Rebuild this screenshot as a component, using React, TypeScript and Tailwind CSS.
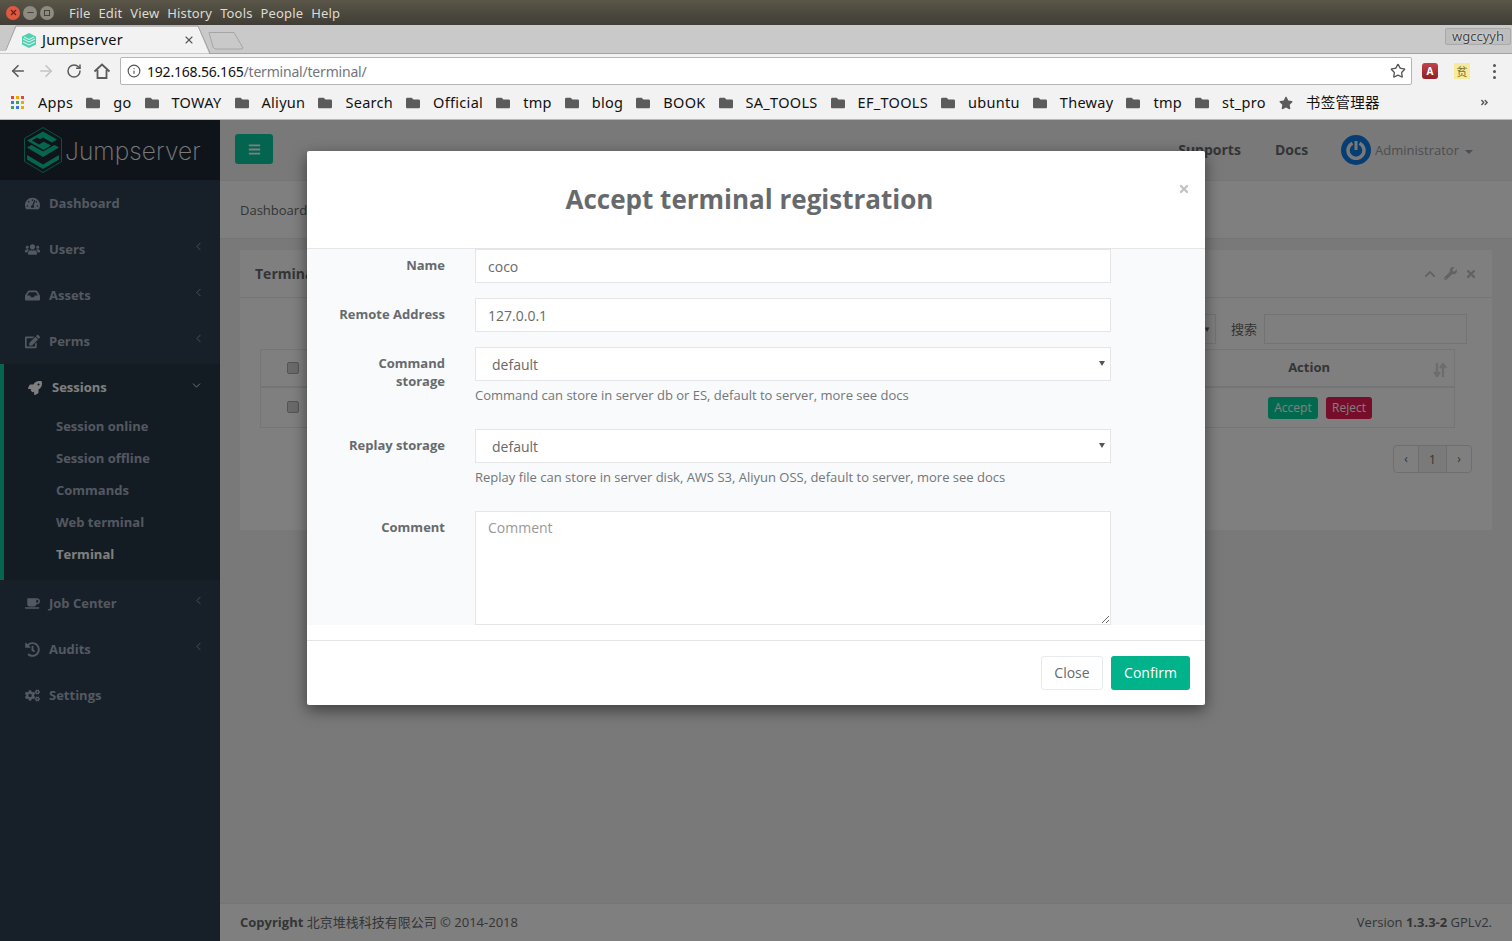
import { ArrowLeft, ArrowRight, RotateCw, Star, Info, X, Minus, ChevronLeft, ChevronDown } from 'lucide-react'
import { FaTachometerAlt, FaUsers, FaInbox, FaEdit, FaRocket, FaCoffee, FaHistory, FaCogs, FaFolder, FaStar, FaTimes, FaBars, FaChevronUp, FaWrench, FaAngleDoubleRight } from 'react-icons/fa'

const bookmarks = ['go', 'TOWAY', 'Aliyun', 'Search', 'Official', 'tmp', 'blog', 'BOOK', 'SA_TOOLS', 'EF_TOOLS', 'ubuntu', 'Theway', 'tmp', 'st_pro']
const menus = ['File', 'Edit', 'View', 'History', 'Tools', 'People', 'Help']
const subItems = ['Session online', 'Session offline', 'Commands', 'Web terminal']

function Logo({ className }: { className: string }) {
  return (
    <svg viewBox="0 0 38 46" className={className} fill="none">
      <path d="M19 .5 37.500 11.500v23L19 45.500.5 34.500v-23z" stroke="#12a583" strokeWidth="1" />
      <path d="M3 28l16 9.500L35 28v4.500L19 42 3 32.500z" fill="#0acb9e" />
      <path d="M3 20.500l4.500-2.500L19 24.500 30.500 18l4.500 2.500-16 9.500z" fill="#0acb9e" />
      <path d="M3 13.500 19 4.500l14 8-5 3-9-5-3.500 2L27 18.500l-7.500 4.500z" fill="#0acb9e" />
      <path d="M8 13.500l5-3 7 4 -5 3z" fill="#1e2836" />
    </svg>
  )
}

function AppsIcon() {
  const colors = ['#e8453c', '#f2a600', '#e8453c', '#3b78e7', '#34a853', '#f2a600', '#34a853', '#3b78e7', '#f2a600']
  return (
    <div className="grid grid-cols-3 gap-[2px] w-[13px] shrink-0">
      {colors.map((c, i) => (
        <span key={i} className="w-[3px] h-[3px]" style={{ background: c }} />
      ))}
    </div>
  )
}

function NavItem({ icon, label, arrow = true }: { icon: React.ReactNode; label: string; arrow?: boolean }) {
  return (
    <div className="h-[46px] flex items-center pl-[25px] pr-[18px] pt-[1px] text-[13px] font-bold text-[#a7b1c2]">
      <span className="w-[24px] text-[15px] shrink-0">{icon}</span>
      <span>{label}</span>
      {arrow && <ChevronLeft size={13} strokeWidth={1.5} className="ml-auto mb-[6px] mr-[-3px]" />}
    </div>
  )
}

function Label({ children }: { children: React.ReactNode }) {
  return <label className="w-[138px] pl-[25px] shrink-0 text-right text-[13px] leading-[18px] font-bold text-[#676a6c] pt-[7px]">{children}</label>
}

function SelectBox() {
  return (
    <div className="relative">
      <select defaultValue="default" className="appearance-none w-full h-[34px] bg-white border border-[#e5e6e7] px-[16px] text-[14px] text-[#676a6c] outline-none">
        <option>default</option>
      </select>
      <span className="absolute right-[6px] top-[14px] w-0 h-0 border-x-[3px] border-x-transparent border-t-[5px] border-t-[#555]" />
    </div>
  )
}

export default function App() {
  return (
    <div className="w-[1512px] h-[941px] overflow-hidden flex flex-col font-['Open_Sans',sans-serif] text-[#676a6c]">
      {/* OS title bar */}
      <div className="h-[25px] shrink-0 bg-gradient-to-b from-[#5a5648] to-[#3f3d36] flex items-center pl-[6px] font-['Noto_Sans',sans-serif]">
        <span className="w-[14px] h-[14px] rounded-full bg-[#e2583e] flex items-center justify-center text-[#5a2018]"><X size={9} strokeWidth={3} /></span>
        <span className="w-[14px] h-[14px] rounded-full bg-[#8d8a80] ml-[3px] flex items-center justify-center text-[#45433c]"><Minus size={9} strokeWidth={3} /></span>
        <span className="w-[14px] h-[14px] rounded-full bg-[#8d8a80] ml-[3px] flex items-center justify-center"><span className="w-[6px] h-[6px] border border-[#45433c]" /></span>
        <nav className="ml-[15px] pt-[2px] flex gap-[8px] text-[13px] tracking-[0.15px] text-[#dfdbd2]">
          {menus.map((m) => <span key={m}>{m}</span>)}
        </nav>
      </div>

      {/* Tab strip */}
      <div className="h-[29px] shrink-0 bg-[#c9c9c9] border-b border-[#a3a3a3] relative font-['Noto_Sans',sans-serif]">
        <svg width="250" height="29" className="absolute left-0 top-0" fill="none">
          <path d="M0 24H6L16 1.500H198L209 28.500H0z" fill="#f2f2f2" />
          <path d="M0 25H6L16 1H198L210 28" stroke="#a0a0a0" />
          <path d="M209 7.500H234L243 23Q243 24 241 24H216Q214 24 213 22z" fill="#c9c9c9" stroke="#a5a5a5" />
        </svg>
        <div className="relative flex items-center h-full pl-[22px] w-[196px] pt-[2px]">
          <svg viewBox="0 0 14 15" className="w-[14px] h-[15px] shrink-0"><path d="M7 0l7 3.500v8L7 15 0 11.500v-8z" fill="#4fd0b0" /><path d="M1 6l6 3 6-3M1 9l6 3 6-3M2 4l5 2.500L12 4" stroke="#e6f7f3" fill="none" /></svg>
          <span className="ml-[6px] text-[14.500px] tracking-[0.3px] text-[#111]">Jumpserver</span>
          <X size={12} strokeWidth={2.2} className="ml-auto mr-[1px] text-[#555]" />
        </div>
        <div className="absolute right-[1px] top-[3px] w-[66px] h-[17px] border border-[#a9a9a9] rounded-[2px] bg-[#bdbdbd] flex items-center justify-center text-[13px] text-[#444] [text-shadow:0_0_2px_#fff]">wgccyyh</div>
      </div>

      {/* Toolbar */}
      <div className="h-[34px] shrink-0 bg-[#f2f2f2] flex items-center pl-[9px] pr-[10px] font-['Noto_Sans',sans-serif]">
        <ArrowLeft size={18} strokeWidth={2.2} className="text-[#5a5a5a]" />
        <ArrowRight size={18} strokeWidth={2.2} className="ml-[10px] text-[#c4c4c4]" />
        <RotateCw size={16} strokeWidth={2.2} className="ml-[11px] text-[#5a5a5a]" />
        <svg viewBox="0 0 18 18" className="ml-[11px] w-[18px] h-[18px]" fill="none" stroke="#5a5a5a" strokeWidth="1.800"><path d="M1.500 9.500 9 2.500l7.500 7M4.500 8v8h9V8" /></svg>
        <div className="ml-[9px] w-[1292px] h-[28px] bg-white border border-[#b5b5b5] rounded-[2px] flex items-center pl-[6px] pr-[5px] text-[14px] tracking-[-0.2px]">
          <Info size={14} strokeWidth={2} className="text-[#555]" />
          <span className="ml-[6px] pt-[1px] text-[#111]">192.168.56.165</span>
          <span className="pt-[1px] text-[#71757d]">/terminal/terminal/</span>
          <Star size={16} strokeWidth={2} className="ml-auto text-[#555]" />
        </div>
        <span className="ml-[10px] w-[16px] h-[16px] rounded-[3px] bg-gradient-to-b from-[#c0444c] to-[#8f2026] text-white text-[10px] font-bold flex items-center justify-center">A</span>
        <span className="ml-[16px] w-[16px] h-[16px] bg-[#f7ea9a] text-[#7a6a2a] text-[11px] flex items-center justify-center font-['Noto_Sans_CJK_SC']">贫</span>
        <div className="ml-[23px] flex flex-col gap-[3px]">
          <span className="w-[3px] h-[3px] bg-[#555] rounded-full" />
          <span className="w-[3px] h-[3px] bg-[#555] rounded-full" />
          <span className="w-[3px] h-[3px] bg-[#555] rounded-full" />
        </div>
      </div>

      {/* Bookmarks */}
      <div className="h-[32px] shrink-0 bg-[#f2f2f2] border-b border-[#b9b9b9] flex items-center pl-[11px] pb-[2px] text-[14.500px] tracking-[0.3px] text-[#111] font-['Noto_Sans','Noto_Sans_CJK_SC',sans-serif]">
        <AppsIcon />
        <span className="ml-[14px]">Apps</span>
        {bookmarks.map((b, i) => (
          <span key={i} className="flex items-center">
            <FaFolder size={14} className="ml-[13px] text-[#5b5b5b]" />
            <span className="ml-[13px]">{b}</span>
          </span>
        ))}
        <FaStar size={14} className="ml-[13px] text-[#5b5b5b]" />
        <span className="ml-[13px]">书签管理器</span>
        <FaAngleDoubleRight size={9} className="ml-auto mr-[23px] text-[#555]" />
      </div>

      {/* Page */}
      <div className="relative flex-1 flex min-h-0 bg-[#f3f3f4]">
        <aside className="w-[220px] shrink-0 bg-[#2f4050] flex flex-col">
          <div className="h-[60px] bg-[#1e2836] flex items-center pl-[24px] shrink-0">
            <Logo className="w-[38px] h-[46px] shrink-0" />
            <span className="ml-[3px] pt-[3px] text-[24.500px] font-['Inter',sans-serif] font-extralight tracking-[0.1px] text-[#f5f5f5]">Jumpserver</span>
          </div>
          <NavItem icon={<FaTachometerAlt />} label="Dashboard" arrow={false} />
          <NavItem icon={<FaUsers />} label="Users" />
          <NavItem icon={<FaInbox />} label="Assets" />
          <NavItem icon={<FaEdit />} label="Perms" />
          <div className="h-[216px] bg-[#293846] border-l-4 border-[#0acb9e] shrink-0">
            <div className="h-[46px] flex items-center pl-[24px] pr-[18px] pt-[1px] text-[13px] font-bold text-[#fff]">
              <span className="w-[24px] text-[14px] shrink-0"><FaRocket /></span>
              <span>Sessions</span>
              <ChevronDown size={13} strokeWidth={1.6} className="ml-auto mb-[5px] mr-[-1px]" />
            </div>
            {subItems.map((s) => (
              <div key={s} className="h-[32px] flex items-center pl-[52px] pt-[1px] text-[13px] font-bold text-[#a7b1c2]">{s}</div>
            ))}
            <div className="h-[32px] flex items-center pl-[52px] pt-[1px] text-[13px] font-bold text-white">Terminal</div>
          </div>
          <NavItem icon={<FaCoffee />} label="Job Center" />
          <NavItem icon={<FaHistory />} label="Audits" />
          <NavItem icon={<FaCogs />} label="Settings" arrow={false} />
        </aside>

        <main className="flex-1 min-w-0 flex flex-col">
          <header className="h-[61px] shrink-0 bg-[#f3f3f4] border-b border-[#e7eaec] flex items-center pl-[15px] pr-[39px] pb-[2px]">
            <button className="w-[38px] h-[30px] rounded-[3px] bg-[#06cb9e] text-white flex items-center justify-center"><FaBars size={13} /></button>
            <span className="ml-auto text-[14px] font-bold">Supports</span>
            <span className="ml-[34px] text-[14px] font-bold">Docs</span>
            <span className="ml-[33px] mt-[2px] w-[30px] h-[30px] rounded-full bg-[#0c7ae6] flex items-center justify-center">
              <svg viewBox="0 0 20 20" className="w-[20px] h-[20px]" fill="none" stroke="#f3f3f4" strokeWidth="3.500"><path d="M6.500 3.200a8 8 0 1 0 7 0" /><path d="M10 1v9" strokeWidth="3" /></svg>
            </span>
            <span className="ml-[4px] mt-[3px] text-[13px] text-[#999c9e]">Administrator</span>
            <span className="ml-[6px] mt-[5px] w-0 h-0 border-x-[4px] border-x-transparent border-t-[4px] border-t-[#999c9e]" />
          </header>
          <div className="h-[58px] shrink-0 bg-white border-b border-[#e7eaec] flex items-center pl-[20px] pt-[3px] text-[13px]">Dashboard</div>
          <div className="mx-[20px] mt-[11px] h-[280px] bg-white flex flex-col shrink-0">
            <div className="h-[48px] shrink-0 border-b border-[#e7eaec] flex items-center pl-[15px] pr-[15px] text-[14px] font-bold text-[#676a6c]">
              Terminal
              <div className="ml-auto flex items-center gap-[8px] text-[#c4c4c4]">
                <FaChevronUp size={12} />
                <FaWrench size={13} />
                <FaTimes size={12} />
              </div>
            </div>
            <div className="flex items-center justify-end mt-[16px] pr-[25px] h-[30px] shrink-0">
              <span className="w-[80px] h-[30px] border border-[#e5e6e7] flex items-center justify-end pr-[4px] text-[8px]">▼</span>
              <span className="ml-[15px] text-[13px] font-['Noto_Sans_CJK_SC',sans-serif]">搜索</span>
              <span className="ml-[7px] w-[203px] h-[30px] border border-[#e5e6e7]" />
            </div>
            <div className="ml-[20px] mr-[37px] mt-[5px] border border-[#e7eaec]">
              <div className="h-[38px] flex items-center pl-[26px] pr-[7px] border-b-2 border-[#e7eaec]">
                <span className="w-[12px] h-[12px] rounded-[2px] border border-[#a9a9a9] bg-[#d4d4d4]" />
                <span className="ml-auto mr-[103px] text-[13px] font-bold">Action</span>
                <svg viewBox="0 0 14 14" className="w-[14px] h-[14px] mt-[3px]" fill="none" stroke="#dadada" strokeWidth="2.400"><path d="M4 0v12M1 9l3 4 3-4M10 14V2M7 5l3-4 3 4" /></svg>
              </div>
              <div className="h-[39px] flex items-center pl-[26px] pr-[82px]">
                <span className="mb-[2px] w-[12px] h-[12px] rounded-[2px] border border-[#a9a9a9] bg-[#d4d4d4]" />
                <span className="ml-auto w-[50px] h-[22px] rounded-[3px] bg-[#03d49c] text-white text-[12px] flex items-center justify-center">Accept</span>
                <span className="ml-[8px] w-[46px] h-[22px] rounded-[3px] bg-[#ed1a56] text-white text-[12px] flex items-center justify-center">Reject</span>
              </div>
            </div>
            <div className="self-end mr-[20px] mt-[17px] flex h-[28px] border border-[#ddd] rounded-[4px] text-[12px] text-[#676a6c]">
              <span className="w-[25px] flex items-center justify-center border-r border-[#ddd]">‹</span>
              <span className="w-[28px] pt-[1px] flex items-center justify-center bg-[#f4f4f4] border-r border-[#ddd] text-[#676a6c]">1</span>
              <span className="w-[24px] flex items-center justify-center">›</span>
            </div>
          </div>
          <footer className="mt-auto h-[38px] shrink-0 bg-white border-t border-[#e7eaec] flex items-center justify-between px-[20px] text-[13px] font-['Open_Sans','Noto_Sans_CJK_SC',sans-serif]">
            <span><b>Copyright</b> 北京堆栈科技有限公司 © 2014-2018</span>
            <span>Version <b>1.3.3-2</b> GPLv2.</span>
          </footer>
        </main>

        {/* Backdrop and modal */}
        <div className="absolute inset-0 bg-black/50" />
        <div className="absolute left-[307px] top-[31px] w-[898px] h-[554px] bg-white rounded-[2px] shadow-[0_5px_15px_rgba(0,0,0,0.5)] flex flex-col">
          <div className="h-[98px] shrink-0 border-b border-[#e5e5e5] relative flex items-center justify-center pr-[13px] pb-[1px]">
            <h4 className="text-[26px] font-bold text-[#676a6c]">Accept terminal registration</h4>
            <FaTimes size={12} className="absolute right-[15px] top-[32px] text-[#c2c2c2]" />
          </div>
          <div className="h-[376px] shrink-0 bg-[#f8fafb] pr-[94px] flex flex-col">
            <div className="flex h-[49px]">
              <Label>Name</Label>
              <input readOnly value="coco" className="ml-[30px] flex-1 h-[34px] bg-white border border-[#e5e6e7] px-[12px] text-[14px] text-[#676a6c] outline-none" />
            </div>
            <div className="flex h-[49px]">
              <Label>Remote Address</Label>
              <input readOnly value="127.0.0.1" className="ml-[30px] flex-1 h-[34px] bg-white border border-[#e5e6e7] px-[12px] text-[14px] text-[#676a6c] outline-none" />
            </div>
            <div className="flex h-[82px]">
              <Label>Command storage</Label>
              <div className="ml-[30px] flex-1">
                <SelectBox />
                <p className="mt-[5px] text-[13px] leading-[18px] text-[#737679]">Command can store in server db or ES, default to server, more see docs</p>
              </div>
            </div>
            <div className="flex h-[82px]">
              <Label>Replay storage</Label>
              <div className="ml-[30px] flex-1">
                <SelectBox />
                <p className="mt-[5px] text-[13px] leading-[18px] text-[#737679]">Replay file can store in server disk, AWS S3, Aliyun OSS, default to server, more see docs</p>
              </div>
            </div>
            <div className="flex">
              <Label>Comment</Label>
              <textarea placeholder="Comment" className="ml-[30px] flex-1 h-[114px] bg-white border border-[#e5e6e7] px-[12px] py-[5px] text-[14px] text-[#676a6c] outline-none placeholder:text-[#999]" />
            </div>
          </div>
          <div className="mt-[15px] h-[65px] shrink-0 border-t border-[#e5e5e5] flex items-center justify-end gap-[8px] pr-[15px]">
            <button className="w-[62px] h-[34px] rounded-[3px] bg-white border border-[#e7eaec] pb-[2px] text-[14px] text-[#676a6c]">Close</button>
            <button className="w-[79px] h-[34px] rounded-[3px] bg-[#00b38a] pb-[2px] text-[14px] text-white">Confirm</button>
          </div>
        </div>
      </div>
    </div>
  )
}
